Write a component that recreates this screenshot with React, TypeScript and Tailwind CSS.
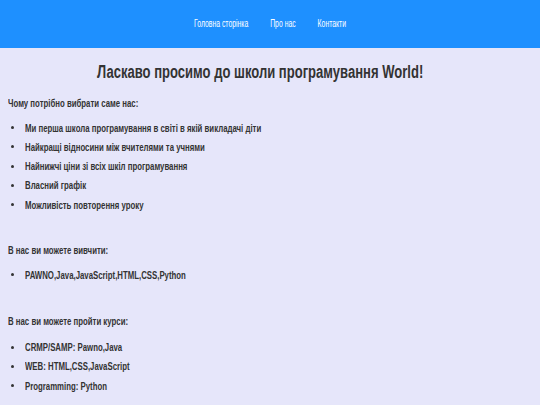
import React from "react";

const reasons = [
  "Ми перша школа програмування в світі в якій викладачі діти",
  "Найкращі відносини між вчителями та учнями",
  "Найнижчі ціни зі всіх шкіл програмування",
  "Власний графік",
  "Можливість повторення уроку",
];

const courses = ["CRMP/SAMP: Pawno,Java", "WEB: HTML,CSS,JavaScript", "Programming: Python"];

function Narrow({ children }: { children: React.ReactNode }) {
  return <span className="inline-block origin-left scale-x-[0.71] whitespace-nowrap">{children}</span>;
}

function BulletList({ items }: { items: string[] }) {
  return (
    <ul className="pl-[3px]">
      {items.map((item) => (
        <li key={item} className="flex items-center h-[19.25px]">
          <span className="w-[3px] h-[3px] rounded-full bg-[#333] mr-[11px] shrink-0" />
          <Narrow>{item}</Narrow>
        </li>
      ))}
    </ul>
  );
}

export default function App() {
  return (
    <div
      className="min-h-[405px] bg-[#e6e6fa] text-[#333]"
      style={{ fontFamily: '"Liberation Sans", Arial, sans-serif' }}
    >
      <header className="h-[48px] bg-[#1e90ff] flex items-center justify-center pb-[1px] text-white text-[10px]">
        <nav className="flex gap-[32px] scale-x-[0.685]">
          <a>Головна сторінка</a>
          <a>Про нас</a>
          <a>Контакти</a>
        </nav>
      </header>
      <main className="px-[8px] text-[11px] font-bold leading-[14px]">
        <h1 className="flex justify-center pr-[19px] pt-[12px] mb-[12px] text-[18px] leading-[24px]">
          <span className="inline-block scale-x-[0.725] whitespace-nowrap">
            Ласкаво просимо до школи програмування World!
          </span>
        </h1>
        <p>
          <Narrow>Чому потрібно вибрати саме нас:</Narrow>
        </p>
        <div className="mt-[8px]">
          <BulletList items={reasons} />
        </div>
        <p className="mt-[29px]">
          <Narrow>В нас ви можете вивчити:</Narrow>
        </p>
        <div className="mt-[8px]">
          <BulletList items={["PAWNO,Java,JavaScript,HTML,CSS,Python"]} />
        </div>
        <p className="mt-[29px]">
          <Narrow>В нас ви можете пройти курси:</Narrow>
        </p>
        <div className="mt-[10px]">
          <BulletList items={courses} />
        </div>
      </main>
    </div>
  );
}
